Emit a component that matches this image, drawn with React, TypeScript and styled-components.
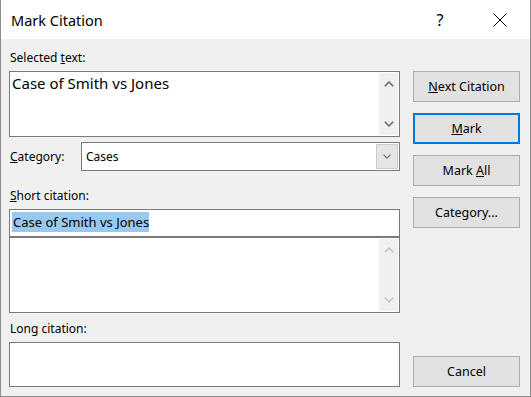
import React from 'react'
import styled, { createGlobalStyle } from 'styled-components'

const GlobalStyle = createGlobalStyle`
  html, body {
    margin: 0;
    padding: 0;
    background: #f0f0f0;
  }
  body {
    font-family: "Segoe UI", "Noto Sans", sans-serif;
    color: #000;
  }
`

const Window = styled.div`
  width: 531px;
  height: 397px;
  box-sizing: border-box;
  border: 1px solid #8c8c8c;
  border-top: none;
  background: #f0f0f0;
  display: flex;
  flex-direction: column;
`

const TitleBar = styled.div`
  height: 39px;
  flex-shrink: 0;
  background: #fff;
  display: flex;
  align-items: center;
  padding-left: 10px;
`

const Title = styled.div`
  flex: 1;
  font-size: 14.5px;
`

const CaptionButton = styled.div<{ $left?: number; $right?: number }>`
  width: 46px;
  height: 39px;
  display: flex;
  align-items: center;
  justify-content: center;
  margin-left: ${(p) => p.$left ?? 0}px;
  margin-right: ${(p) => p.$right ?? 0}px;
  font-size: 16px;
  color: #000;
`

const Body = styled.div`
  flex: 1;
  display: grid;
  grid-template-columns: 391px 107px;
  column-gap: 13px;
  padding: 11px 10px 10px 8px;
`

const LeftColumn = styled.div`
  display: flex;
  flex-direction: column;
`

const RightColumn = styled.div`
  display: flex;
  flex-direction: column;
  gap: 11px;
  padding-top: 21px;
`

const Label = styled.div<{ $top?: number }>`
  font-size: 12px;
  line-height: 16px;
  height: 16px;
  margin-top: ${(p) => p.$top ?? 0}px;
  margin-bottom: 5px;
  padding-left: 1px;
  white-space: nowrap;
`

const Field = styled.div<{ $height: number }>`
  box-sizing: border-box;
  height: ${(p) => p.$height}px;
  border: 1px solid #7a7a7a;
  background: #fff;
  display: flex;
`

const FieldText = styled.div<{ $size: number }>`
  flex: 1;
  font-size: ${(p) => p.$size}px;
  line-height: 20px;
  padding: 1px 2px;
  white-space: nowrap;
`

const Selection = styled.span`
  background: #99c9ef;
  padding: 1px 0 1px 1px;
`

const ScrollTrack = styled.div`
  width: 19px;
  margin: 1px;
  background: #f0f0f0;
  display: flex;
  flex-direction: column;
  justify-content: space-between;
  align-items: center;
  padding: 8px 0;
`

const CategoryRow = styled.div`
  display: flex;
  align-items: center;
  margin-top: 5px;
  height: 29px;
`

const CategoryLabel = styled(Label)`
  width: 71px;
  margin-bottom: 0;
`

const Combo = styled.div`
  flex: 1;
  height: 29px;
  box-sizing: border-box;
  border: 1px solid #7a7a7a;
  background: #fff;
  display: flex;
  align-items: center;
  font-size: 12px;
  padding-left: 4px;
`

const ComboValue = styled.div`
  flex: 1;
`

const DropButton = styled.div`
  width: 22px;
  height: 25px;
  margin: 1px;
  box-sizing: border-box;
  border: 1px solid #cccccc;
  background: #e5e5e5;
  display: flex;
  align-items: center;
  justify-content: center;
`

const Button = styled.div<{ $default?: boolean }>`
  box-sizing: border-box;
  height: 31px;
  border: ${(p) => (p.$default ? '2px solid #0078d7' : '1px solid #adadad')};
  background: #e1e1e1;
  display: flex;
  align-items: center;
  justify-content: center;
  font-size: 12.5px;
  white-space: nowrap;
`

const CancelButton = styled(Button)`
  margin-top: auto;
`

const Chevron: React.FC<{ dir: 'up' | 'down'; color?: string; w?: number }> = ({
  dir,
  color = '#606060',
  w = 10,
}) => (
  <svg width={w} height={w / 2 + 1} viewBox="0 0 10 6">
    <path
      d={dir === 'up' ? 'M0.8 5.2 L5 1 L9.2 5.2' : 'M0.8 0.8 L5 5 L9.2 0.8'}
      fill="none"
      stroke={color}
      strokeWidth="1.4"
    />
  </svg>
)

const CloseIcon = () => (
  <svg width="14" height="14" viewBox="0 0 14 14">
    <path d="M0.5 0.5 L13.5 13.5 M13.5 0.5 L0.5 13.5" stroke="#000" strokeWidth="1" />
  </svg>
)

export default function App() {
  return (
    <>
      <GlobalStyle />
      <Window>
        <TitleBar>
          <Title>Mark Citation</Title>
          <CaptionButton>?</CaptionButton>
          <CaptionButton $left={14} $right={7}>
            <CloseIcon />
          </CaptionButton>
        </TitleBar>
        <Body>
          <LeftColumn>
            <Label>
              Selected <u>t</u>ext:
            </Label>
            <Field $height={66}>
              <FieldText $size={15}>Case of Smith vs Jones</FieldText>
              <ScrollTrack>
                <Chevron dir="up" />
                <Chevron dir="down" />
              </ScrollTrack>
            </Field>
            <CategoryRow>
              <CategoryLabel>
                <u>C</u>ategory:
              </CategoryLabel>
              <Combo>
                <ComboValue>Cases</ComboValue>
                <DropButton>
                  <Chevron dir="down" w={8} color="#707070" />
                </DropButton>
              </Combo>
            </CategoryRow>
            <Label $top={17}>
              <u>S</u>hort citation:
            </Label>
            <Field $height={28}>
              <FieldText $size={13} style={{ paddingTop: 2 }}>
                <Selection>Case of Smith vs Jones</Selection>
              </FieldText>
            </Field>
            <Field $height={76}>
              <FieldText $size={13} />
              <ScrollTrack>
                <Chevron dir="up" color="#c0c0c0" />
                <Chevron dir="down" color="#c0c0c0" />
              </ScrollTrack>
            </Field>
            <Label $top={8}>Long citation:</Label>
            <Field $height={45} />
          </LeftColumn>
          <RightColumn>
            <Button>
              <span>
                <u>N</u>ext Citation
              </span>
            </Button>
            <Button $default>
              <span>
                <u>M</u>ark
              </span>
            </Button>
            <Button>
              <span>
                Mark <u>A</u>ll
              </span>
            </Button>
            <Button>Category...</Button>
            <CancelButton>Cancel</CancelButton>
          </RightColumn>
        </Body>
      </Window>
    </>
  )
}
